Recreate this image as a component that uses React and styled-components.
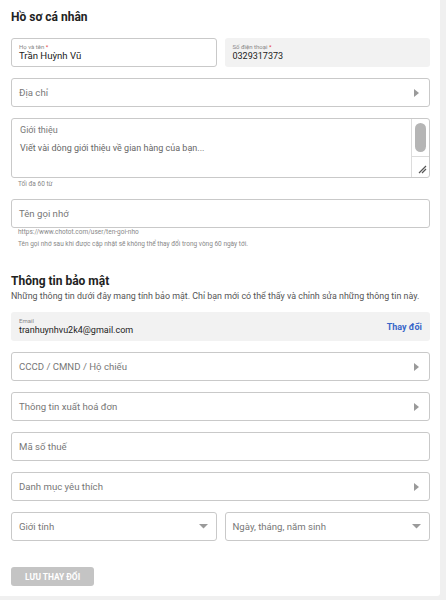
import React from 'react';
import styled, { createGlobalStyle } from 'styled-components';

const GlobalStyle = createGlobalStyle`
  html, body {
    margin: 0;
    padding: 0;
    background: #f0f0f0;
    font-family: Roboto, "Liberation Sans", Arial, sans-serif;
  }
`;

const Page = styled.div`
  width: 446px;
  padding-right: 6px;
  box-sizing: border-box;
`;

const Card = styled.div`
  background: #fff;
  padding: 9px 10px 10px 11px;
  border-bottom-right-radius: 3px;
`;

const Heading = styled.h2`
  margin: ${p => p.$top || 0}px 0 0;
  font-size: 12px;
  font-weight: 700;
  color: #222;
  line-height: 16px;
`;

const SubText = styled.p`
  margin: 1px 0 0;
  font-size: 8.9px;
  color: #555;
  line-height: 12px;
  white-space: nowrap;
`;

const Stack = styled.div`
  display: flex;
  flex-direction: column;
  gap: 11px;
  margin-top: ${p => p.$top || 0}px;
`;

const Row = styled.div`
  display: grid;
  grid-template-columns: 1fr 1fr;
  gap: 8px;
`;

const Field = styled.div`
  height: 29px;
  box-sizing: border-box;
  border: 1px solid ${p => (p.$filled ? 'transparent' : '#c9c9c9')};
  background: ${p => (p.$filled ? '#f2f2f2' : '#fff')};
  border-radius: 3px;
  display: flex;
  align-items: center;
  padding: 0 ${p => p.$pr || 10}px 0 7px;
`;

const FieldBody = styled.div`
  flex: 1;
  min-width: 0;
  display: flex;
  flex-direction: column;
  margin-top: -1px;
`;

const MiniLabel = styled.span`
  font-size: 6px;
  color: #888;
  line-height: 7px;
`;

const Star = styled.span`
  color: #e53935;
`;

const Value = styled.span`
  font-size: ${p => p.$size || 9}px;
  color: #222;
  line-height: 12px;
`;

const Placeholder = styled.span`
  flex: 1;
  font-size: 9.6px;
  color: #777;
`;

const Hint = styled.div`
  font-size: 6.5px;
  color: #888;
  line-height: 7px;
  padding-left: 7px;
  white-space: nowrap;
  margin-top: ${p => p.$top || 4}px;
`;

const Group = styled.div`
  display: flex;
  flex-direction: column;
`;

const TextArea = styled.div`
  height: 60px;
  box-sizing: border-box;
  border: 1px solid #c9c9c9;
  border-radius: 3px;
  display: flex;
`;

const TextAreaBody = styled.div`
  flex: 1;
  padding: 5px 8px;
  display: flex;
  flex-direction: column;
  gap: 6px;
`;

const TextPlaceholder = styled.span`
  font-size: 9px;
  color: ${p => (p.$dark ? '#666' : '#777')};
  line-height: 12px;
`;

const ScrollCol = styled.div`
  width: 17px;
  border-left: 1px solid #dcdcdc;
  display: flex;
  flex-direction: column;
`;

const ScrollTrack = styled.div`
  flex: 1;
  padding: 4px 3px;
`;

const Thumb = styled.div`
  width: 11px;
  height: 29px;
  border-radius: 6px;
  background: #b5b5b5;
`;

const Resizer = styled.div`
  height: 19px;
  border-top: 1px solid #dcdcdc;
  display: flex;
  align-items: flex-end;
  justify-content: flex-end;
  padding: 0 2px 3px 0;
`;

const ChangeLink = styled.span`
  font-size: 9px;
  font-weight: 700;
  color: #3867c9;
`;

const SaveButton = styled.button`
  display: block;
  margin-top: 26px;
  width: 83px;
  height: 19px;
  border: none;
  border-radius: 3px;
  background: #c4c4c4;
  color: #fff;
  font-family: inherit;
  font-size: 8.4px;
  font-weight: 700;
  padding: 0;
`;

const ArrowRight = () => (
  <svg width="5" height="8" viewBox="0 0 5 8">
    <path d="M0 0 L5 4 L0 8 Z" fill="#9a9a9a" />
  </svg>
);

const ArrowDown = () => (
  <svg width="9" height="5" viewBox="0 0 9 5">
    <path d="M0 0 L9 0 L4.5 4.5 Z" fill="#9a9a9a" />
  </svg>
);

const SelectField = ({ label, down }) => (
  <Field $pr={down ? 8 : 10}>
    <Placeholder>{label}</Placeholder>
    {down ? <ArrowDown /> : <ArrowRight />}
  </Field>
);

export default function App() {
  return (
    <>
      <GlobalStyle />
      <Page>
        <Card>
          <Heading>Hồ sơ cá nhân</Heading>
          <Stack $top={13}>
            <Row>
              <Field>
                <FieldBody>
                  <MiniLabel>Họ và tên <Star>*</Star></MiniLabel>
                  <Value $size={9.6}>Trần Huỳnh Vũ</Value>
                </FieldBody>
              </Field>
              <Field $filled>
                <FieldBody>
                  <MiniLabel>Số điện thoại <Star>*</Star></MiniLabel>
                  <Value>0329317373</Value>
                </FieldBody>
              </Field>
            </Row>
            <SelectField label="Địa chỉ" />
            <Group>
              <TextArea>
                <TextAreaBody>
                  <TextPlaceholder>Giới thiệu</TextPlaceholder>
                  <TextPlaceholder $dark>Viết vài dòng giới thiệu về gian hàng của bạn...</TextPlaceholder>
                </TextAreaBody>
                <ScrollCol>
                  <ScrollTrack>
                    <Thumb />
                  </ScrollTrack>
                  <Resizer>
                    <svg width="9" height="9" viewBox="0 0 9 9">
                      <path d="M1 8 L8 1 M4 8 L8 4" stroke="#555" strokeWidth="1.2" />
                    </svg>
                  </Resizer>
                </ScrollCol>
              </TextArea>
              <Hint $top={3}>Tối đa 60 từ</Hint>
            </Group>
            <Group>
              <Field>
                <Placeholder>Tên gọi nhớ</Placeholder>
              </Field>
              <Hint $top={1}>https://www.chotot.com/user/ten-goi-nho</Hint>
              <Hint $top={5}>Tên gọi nhớ sau khi được cập nhật sẽ không thể thay đổi trong vòng 60 ngày tới.</Hint>
            </Group>
          </Stack>

          <Heading $top={25}>Thông tin bảo mật</Heading>
          <SubText>Những thông tin dưới đây mang tính bảo mật. Chỉ bạn mới có thể thấy và chỉnh sửa những thông tin này.</SubText>

          <Stack $top={10}>
            <Field $filled $pr={7}>
              <FieldBody>
                <MiniLabel>Email</MiniLabel>
                <Value>tranhuynhvu2k4@gmail.com</Value>
              </FieldBody>
              <ChangeLink>Thay đổi</ChangeLink>
            </Field>
            <SelectField label="CCCD / CMND / Hộ chiếu" />
            <SelectField label="Thông tin xuất hoá đơn" />
            <Field>
              <Placeholder>Mã số thuế</Placeholder>
            </Field>
            <SelectField label="Danh mục yêu thích" />
            <Row>
              <SelectField label="Giới tính" down />
              <SelectField label="Ngày, tháng, năm sinh" down />
            </Row>
          </Stack>
          <SaveButton>LƯU THAY ĐỔI</SaveButton>
        </Card>
      </Page>
    </>
  );
}
